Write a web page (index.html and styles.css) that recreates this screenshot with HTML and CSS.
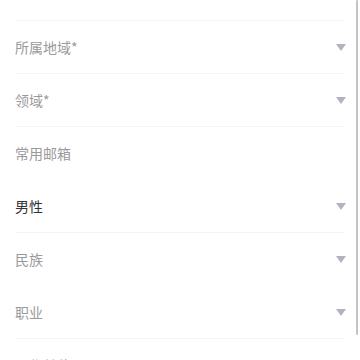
FILE: index.html
```html
<!DOCTYPE html>
<html lang="zh-CN">
<head>
    <meta charset="UTF-8" />
    <meta name="viewport" content="width=device-width, initial-scale=1.0"/>
    <title>个人信息</title>
    <link rel="stylesheet" href="styles.css">
</head>
<body>
    <main class="form">
        <div class="form-top"></div>
        <div class="form-row">
            <span class="label">所属地域*</span>
            <span class="arrow"></span>
        </div>
        <div class="form-row">
            <span class="label">领域*</span>
            <span class="arrow"></span>
        </div>
        <div class="form-row no-line">
            <span class="label">常用邮箱</span>
        </div>
        <div class="form-row">
            <span class="label filled">男性</span>
            <span class="arrow"></span>
        </div>
        <div class="form-row no-line">
            <span class="label">民族</span>
            <span class="arrow"></span>
        </div>
        <div class="form-row">
            <span class="label">职业</span>
            <span class="arrow"></span>
        </div>
        <div class="form-row">
            <span class="label">工作单位</span>
        </div>
    </main>
    <div class="scroll-bar"></div>
</body>
</html>
```

FILE: styles.css
```css
html, body {
    margin: 0;
    height: 100%;
    overflow: hidden;
}

body {
    font-family: "Noto Sans CJK SC", "Noto Sans", sans-serif;
    background: #fff;
    color: #333;
    position: relative;
}

.form {
    padding: 0 15px;
}

.form-top {
    height: 20px;
    border-bottom: 1px solid #f3f3f3;
}

.form-row {
    height: 52px;
    display: flex;
    align-items: center;
    justify-content: space-between;
    border-bottom: 1px solid #f3f3f3;
}

.form-row.no-line {
    border-bottom-color: transparent;
}

.label {
    font-size: 14px;
    color: #9a9a9a;
}

.label.filled {
    color: #333;
}

.arrow {
    width: 0;
    height: 0;
    margin-right: -1px;
    border-left: 5.5px solid transparent;
    border-right: 5.5px solid transparent;
    border-top: 7px solid #b1b3bf;
}

.scroll-bar {
    position: absolute;
    top: 0;
    right: 2px;
    width: 2px;
    height: 335px;
    background: #c4c4c4;
    border-radius: 1px;
}
```
